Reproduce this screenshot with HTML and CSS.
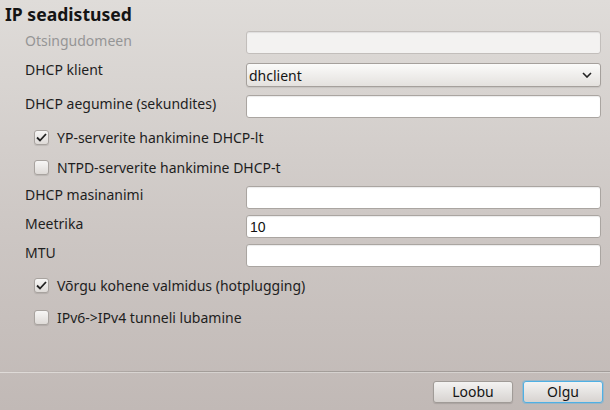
FILE: index.html
```html
<!DOCTYPE html>
<html>
<head>
<meta charset="utf-8">
<link rel="stylesheet" href="styles.css">
</head>
<body>
<div class="dialog">
  <h1 class="title">IP seadistused</h1>
  <div class="form">
    <div class="row r1">
      <span class="label disabled">Otsingudomeen</span>
      <div class="entry is-disabled"></div>
    </div>
    <div class="row r2">
      <span class="label">DHCP klient</span>
      <div class="combo"><span>dhclient</span>
        <svg class="chev" width="10" height="6" viewBox="0 0 10 6"><path d="M1 1 L5 5 L9 1" fill="none" stroke="#222" stroke-width="1.6"/></svg>
      </div>
    </div>
    <div class="row r3">
      <span class="label">DHCP aegumine (sekundites)</span>
      <div class="entry"></div>
    </div>
    <label class="check c1"><span class="box"><svg width="11" height="9" viewBox="0 0 11 9"><path d="M1 4.5 L4 7.5 L10 1" fill="none" stroke="#222" stroke-width="1.8"/></svg></span>YP-serverite hankimine DHCP-lt</label>
    <label class="check c2"><span class="box"></span>NTPD-serverite hankimine DHCP-t</label>
    <div class="row r4">
      <span class="label">DHCP masinanimi</span>
      <div class="entry"></div>
    </div>
    <div class="row r5">
      <span class="label">Meetrika</span>
      <div class="entry"><span class="val">10</span></div>
    </div>
    <div class="row r6">
      <span class="label">MTU</span>
      <div class="entry"></div>
    </div>
    <label class="check c3"><span class="box"><svg width="11" height="9" viewBox="0 0 11 9"><path d="M1 4.5 L4 7.5 L10 1" fill="none" stroke="#222" stroke-width="1.8"/></svg></span>Võrgu kohene valmidus (hotplugging)</label>
    <label class="check c4"><span class="box"></span>IPv6-&gt;IPv4 tunneli lubamine</label>
  </div>
  <div class="sep"></div>
  <div class="buttons">
    <button class="btn">Loobu</button>
    <button class="btn focus">Olgu</button>
  </div>
</div>
</body>
</html>
```

FILE: styles.css
```css
html, body {
  margin: 0;
  padding: 0;
}
body {
  width: 610px;
  height: 410px;
  background: linear-gradient(to bottom, #dfdcd9 0%, #cdc7c4 55%, #c1b9b6 100%);
  font-family: "Noto Sans", sans-serif;
  font-size: 14px;
  color: #1e1e1e;
  overflow: hidden;
}
.dialog {
  height: 410px;
  display: flex;
  flex-direction: column;
}
.title {
  margin: 0;
  padding: 3px 0 0 5px;
  font-size: 17.6px;
  font-weight: bold;
  line-height: 23px;
  color: #141414;
}
.form {
  padding: 0 9px 0 25px;
  display: flex;
  flex-direction: column;
}
.row {
  display: grid;
  grid-template-columns: 221px 1fr;
  align-items: start;
}
.label {
  line-height: 19px;
  white-space: nowrap;
}
.label.disabled {
  color: #959595;
}
.entry {
  height: 21px;
  background: #fff;
  border: 1px solid #aaa5a1;
  border-radius: 3px;
  box-shadow: inset 0 1px 1px rgba(0,0,0,0.08);
  display: flex;
  align-items: center;
}
.entry.is-disabled {
  background: #f3f2f1;
  border-color: #c2bebb;
}
.val {
  font-family: "Liberation Sans", Arial, sans-serif;
  font-size: 14px;
  padding-left: 3px;
  color: #111;
}
.combo {
  height: 22px;
  border: 1px solid #a5a09c;
  border-radius: 3px;
  background: linear-gradient(to bottom, #fbfbfa, #e4e1de);
  display: flex;
  align-items: center;
  justify-content: space-between;
  padding: 0 8px 0 2px;
  box-shadow: 0 1px 1px rgba(0,0,0,0.08);
}
.combo span {
  font-size: 14px;
  color: #141414;
}
.r1 { margin-top: 5px; }
.r1 .label { margin-top: 0; }
.r2 { margin-top: 9px; }
.r2 .label { margin-top: -3px; }
.r3 { margin-top: 8px; }
.r3 .label { margin-top: -1px; }
.check {
  display: flex;
  align-items: center;
  margin-left: 9px;
  line-height: 19px;
  height: 19px;
}
.box {
  width: 13px;
  height: 13px;
  border: 1px solid #a8a39f;
  border-radius: 3px;
  background: linear-gradient(to bottom, #f7f6f5, #dedad7);
  margin-right: 8px;
  display: flex;
  align-items: center;
  justify-content: center;
  box-shadow: 0 1px 1px rgba(0,0,0,0.1);
}
.c1 { margin-top: 10px; }
.c2 { margin-top: 11px; }
.r4 { margin-top: 9px; }
.r4 .label { margin-top: -1px; }
.r5 { margin-top: 6px; }
.r5 .label { margin-top: -1px; }
.r6 { margin-top: 6px; }
.r6 .label { margin-top: -1px; }
.c3 { margin-top: 9px; }
.c4 { margin-top: 13px; }
.sep {
  margin-top: auto;
  height: 1px;
  background: linear-gradient(to right, rgba(160,154,150,0) 0%, rgba(160,154,150,0.9) 30%, #a39d9a 100%);
  border-bottom: 1px solid rgba(235,232,230,0.7);
}
.buttons {
  display: flex;
  justify-content: flex-end;
  gap: 10px;
  padding: 8px 7px 7px 0;
}
.btn {
  width: 80px;
  height: 22px;
  font-family: "Noto Sans", sans-serif;
  font-size: 14px;
  color: #141414;
  border: 1px solid #a09b97;
  border-radius: 3px;
  background: linear-gradient(to bottom, #f4f3f2, #d7d3d0);
  padding: 0;
  line-height: 18px;
  box-shadow: 0 1px 1px rgba(0,0,0,0.12);
}
.btn.focus {
  border-color: #4fb0e4;
  box-shadow: 0 0 0 1px rgba(80,176,228,0.35);
}
```
